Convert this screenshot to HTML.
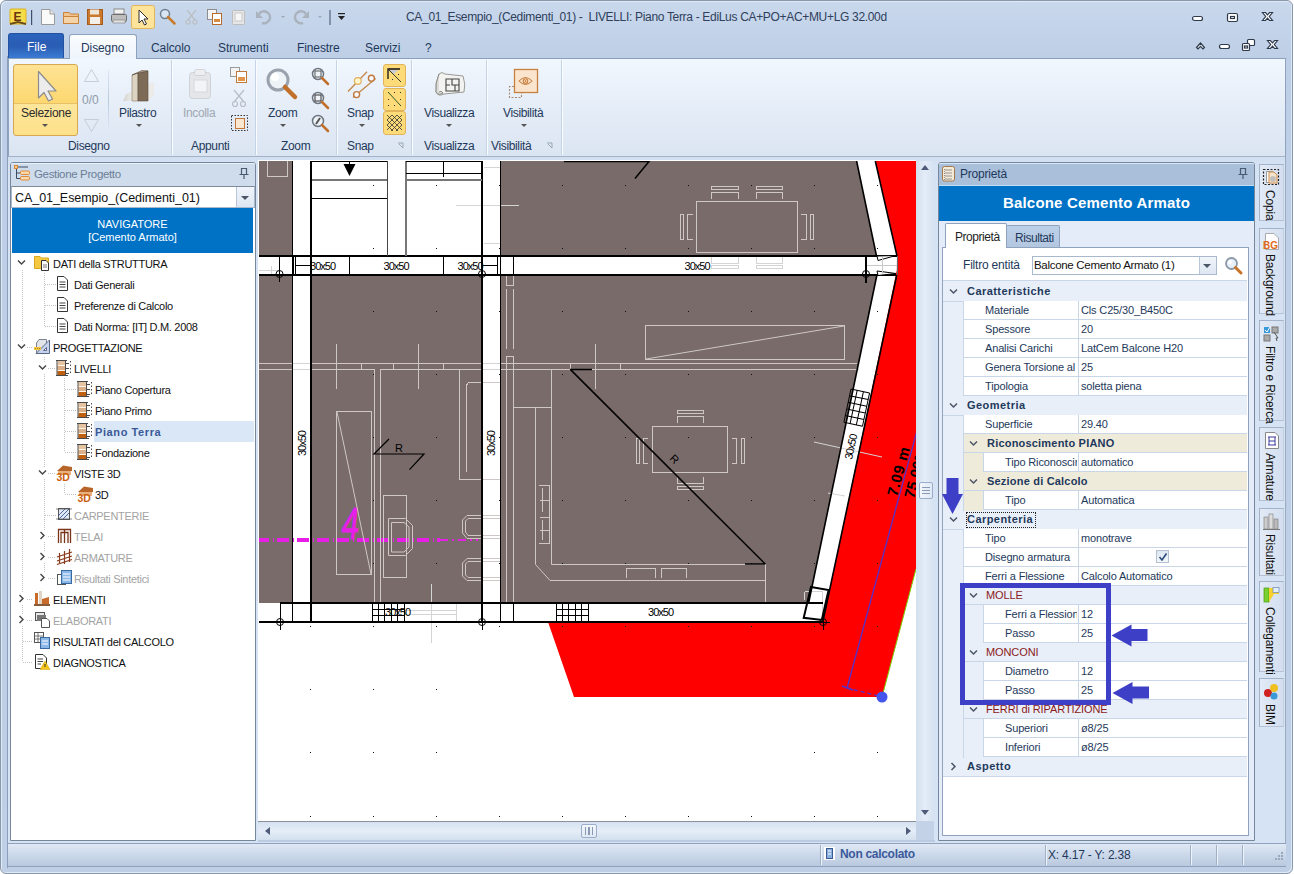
<!DOCTYPE html>
<html><head><meta charset="utf-8">
<style>
*{box-sizing:border-box;margin:0;padding:0}
html,body{width:1294px;height:874px;overflow:hidden;background:#fff;font-family:"Liberation Sans",sans-serif;color:#1e1e1e}
.a{position:absolute}
.t{position:absolute;white-space:nowrap;line-height:1}
/* frame */
#frame{left:0;top:0;width:1293px;height:874px;border:1px solid #8b98aa;border-radius:6px 6px 6px 6px;box-shadow:inset 1px 1px 0 #dfeaf7,inset -1px -1px 0 #dfeaf7;background:linear-gradient(#c9d8ec,#bdcee6 60px,#becfe6)}
.tab{font-size:12px;color:#1e395b;top:42px;letter-spacing:-0.1px}
.rb-lbl{font-size:12px;color:#1e395b;top:140px;letter-spacing:-0.35px}
.rb-big{font-size:12px;color:#1e395b;top:107px;letter-spacing:-0.35px}
.sep{width:1px;background:linear-gradient(#dfe8f4,#b9c9dd,#dfe8f4)}
.gsep{top:60px;width:2px;height:95px;border-left:1px solid #c5d3e6;border-right:1px solid #fafcff}
.arr{width:0;height:0;border-left:3px solid transparent;border-right:3px solid transparent;border-top:3px solid #555}
</style></head><body>
<div id="frame" class="a"></div>
<!-- title bar -->
<div class="a" style="left:7px;top:56px;width:1px;height:812px;background:#8b9dbb"></div>
<div class="t" style="left:406px;top:11px;font-size:12px;color:#2f3f5c;letter-spacing:-0.32px">CA_01_Esempio_(Cedimenti_01) -&nbsp; LIVELLI: Piano Terra - EdiLus CA+PO+AC+MU+LG 32.00d</div>
<!-- window buttons -->
<svg class="a" style="left:1186px;top:8px" width="100" height="46">
 <g fill="#fff" stroke="#2e3a4c" stroke-width="1.2">
  <rect x="6.5" y="8.5" width="10" height="4" rx="2"/>
  <rect x="41.5" y="5.5" width="10" height="8" rx="1.5"/><rect x="44.5" y="8.5" width="4" height="2" fill="none"/>
  <path d="M76.5 4.5 L79.5 4.5 L81.5 6.8 L83.5 4.5 L86.5 4.5 L83.3 8.5 L86.5 12.5 L83.5 12.5 L81.5 10.2 L79.5 12.5 L76.5 12.5 L79.7 8.5Z"/>
  <path d="M10.5 39.5 L14.5 35 L18.5 39.5 L17 41 L14.5 38.3 L12 41Z"/>
  <rect x="33.5" y="36.5" width="10" height="4" rx="2"/>
  <rect x="61.5" y="31.5" width="7" height="6" rx="1"/><rect x="56.5" y="35.5" width="7" height="7" rx="1"/><rect x="58.5" y="38" width="3" height="2" fill="none"/>
  <path d="M81.5 32.5 L84.5 32.5 L86.5 34.8 L88.5 32.5 L91.5 32.5 L88.3 36.5 L91.5 40.5 L88.5 40.5 L86.5 38.2 L84.5 40.5 L81.5 40.5 L84.7 36.5Z"/>
 </g>
</svg>
<!-- QAT -->
<svg class="a" style="left:0;top:0" width="360" height="32">
 <!-- E logo -->
 <rect x="10" y="9" width="16" height="15" rx="1" fill="#f7dc4a" stroke="#d9b21c"/>
 <path d="M10 23 L18 21 L26 23 L26 25 L18 23 L10 25Z" fill="#6b4a1a"/>
 <text x="13.5" y="21" font-family="Liberation Sans" font-weight="bold" font-size="12" fill="#6b3410">E</text>
 <rect x="31" y="10" width="1.2" height="15" fill="#40506a"/>
 <!-- new doc -->
 <path d="M41.5 9.5 H50 L54.5 14 V24.5 H41.5Z" fill="#fafafa" stroke="#9a9a9a"/>
 <path d="M50 9.5 V14 H54.5" fill="#e8e8e8" stroke="#9a9a9a"/>
 <!-- folder -->
 <path d="M63.5 12.5 H69 L71 14 H78.5 V23.5 H63.5Z" fill="#f0c48e" stroke="#c8823a"/>
 <path d="M63.5 16.5 H78.5 V23.5 H63.5Z" fill="#f5d3a8" stroke="#c8823a"/>
 <!-- save -->
 <rect x="87.5" y="9.5" width="15" height="15" fill="#c9782e" stroke="#a65a1c"/>
 <rect x="90" y="9.5" width="9" height="5" fill="#efe4d8"/>
 <rect x="90" y="17" width="10" height="7" fill="#f4efe8"/>
 <!-- printer -->
 <rect x="114" y="9" width="10" height="5" fill="#f2f2f2" stroke="#8a8a8a"/>
 <rect x="111.5" y="14.5" width="15" height="7" rx="1" fill="#bdbdbd" stroke="#6d6d6d"/>
 <rect x="113" y="20" width="12" height="3" fill="#e0e0e0" stroke="#7a7a7a" stroke-width=".6"/>
 <!-- pointer highlighted -->
 <rect x="131.5" y="5.5" width="23" height="23" rx="2" fill="#fde49a" stroke="#e2b65a"/>
 <path d="M139 10 V23 L142 20 L144.5 25 L146.5 24 L144 19 H148Z" fill="#fff" stroke="#303030" stroke-width="1"/>
 <!-- magnifier -->
 <circle cx="165" cy="14" r="4.5" fill="#d8e6f4" stroke="#6f7f90" stroke-width="1.5"/>
 <path d="M168 17 L174.5 23.5" stroke="#c87b2a" stroke-width="2.5" stroke-linecap="round"/>
 <!-- scissors disabled -->
 <path d="M187 10 L195 20 M196 10 L188 20" stroke="#b9b9b9" stroke-width="1.2"/>
 <circle cx="188" cy="22" r="2.2" fill="none" stroke="#b9b9b9"/><circle cx="195" cy="22" r="2.2" fill="none" stroke="#b9b9b9"/>
 <!-- copy -->
 <rect x="207.5" y="9.5" width="9" height="10" fill="#f4f4f4" stroke="#8d8d8d"/>
 <rect x="212.5" y="13.5" width="9" height="11" fill="#fff" stroke="#b86a2a"/>
 <rect x="214" y="19" width="6" height="3" fill="#d98a3c"/>
 <!-- paste disabled -->
 <rect x="232.5" y="10.5" width="12" height="14" rx="1" fill="#e6e6e6" stroke="#bdbdbd"/>
 <rect x="235" y="13" width="7" height="8" fill="#f6f6f6" stroke="#c8c8c8"/>
 <!-- undo -->
 <path d="M259 14 A6 6 0 1 1 262 23" fill="none" stroke="#a9b2bd" stroke-width="2.5"/>
 <path d="M256 11 L256 18 L263 18Z" fill="#a9b2bd"/>
 <path d="M281 16 L285 16 L283 18Z" fill="#a0aab6"/>
 <!-- redo -->
 <path d="M306 14 A6 6 0 1 0 303 23" fill="none" stroke="#a9b2bd" stroke-width="2.5"/>
 <path d="M309 11 L309 18 L302 18Z" fill="#a9b2bd"/>
 <path d="M318 16 L322 16 L320 18Z" fill="#a0aab6"/>
 <rect x="329.5" y="10" width="1" height="15" fill="#40506a"/>
 <rect x="338" y="13" width="7" height="1.2" fill="#222"/>
 <path d="M338 16 L345 16 L341.5 20Z" fill="#222"/>
</svg>


<!-- tabs -->
<div class="a" style="left:8px;top:33px;width:56px;height:25px;border-radius:3px 3px 0 0;background:linear-gradient(#2b63bd,#2a5db3 50%,#3b7bd3);border:1px solid #2451a0;border-bottom:none"></div>
<div class="t" style="left:27px;top:41px;font-size:12px;color:#fff">File</div>
<div class="a" style="left:69px;top:34px;width:68px;height:25px;border-radius:3px 3px 0 0;background:linear-gradient(#fbfdff,#eef4fc);border:1px solid #8ea3bf;border-bottom:none;z-index:2"></div>
<div class="t tab" style="left:81px;z-index:3">Disegno</div>
<div class="t tab" style="left:151px">Calcolo</div>
<div class="t tab" style="left:218px">Strumenti</div>
<div class="t tab" style="left:297px">Finestre</div>
<div class="t tab" style="left:365px">Servizi</div>
<div class="t tab" style="left:425px">?</div>

<!-- ribbon body -->
<div class="a" style="left:8px;top:58px;width:1278px;height:99px;border:1px solid #8ea3bf;border-top-color:#8a9fbb;border-bottom-color:#a2b3ca;background:linear-gradient(#f1f7fe,#e4ecf7 55%,#dbe5f2)"></div>
<!-- ribbon content -->
<div class="a" style="left:13px;top:64px;width:65px;height:72px;border:1px solid #d9a84e;border-radius:3px;background:linear-gradient(#fee394,#fdd870 54%,#fde69c 55%,#fde08a)"></div>
<div class="a" style="left:14px;top:103px;width:63px;height:1px;background:#e8c06a"></div>
<svg class="a" style="left:13px;top:64px" width="65" height="40"><path d="M25.5 7.5 V34 L31 28.5 L35.5 37 L39.5 35 L35 27 H43Z" fill="#ececec" stroke="#8c8c8c" stroke-width="1.2" stroke-linejoin="round"/></svg>
<div class="t rb-big" style="left:21px;color:#2b2b2b;letter-spacing:-0.3px">Selezione</div>
<div class="a arr" style="left:42px;top:124px"></div>
<svg class="a" style="left:80px;top:64px" width="24" height="72">
 <path d="M4.5 17.5 L11.5 5.5 L18.5 17.5Z" fill="none" stroke="#c5cdd8"/>
 <path d="M4.5 55.5 L11.5 67.5 L18.5 55.5Z" fill="none" stroke="#c5cdd8"/>
</svg>
<div class="t" style="left:82px;top:94px;font-size:12px;color:#8e9aa8">0/0</div>
<div class="a sep" style="left:108px;top:70px;height:60px"></div>
<svg class="a" style="left:118px;top:66px" width="42" height="40">
 <defs><linearGradient id="slab" x1="0" y1="0" x2="1" y2="0"><stop offset="0" stop-color="#d4d4d0"/><stop offset="1" stop-color="#f0f0ee"/></linearGradient></defs>
 <path d="M5 35 L8 28 L16 25 L16 35Z" fill="url(#slab)"/>
 <path d="M24 20 L36 16 L36 30 L30 35 L24 35Z" fill="#ecebea"/>
 <path d="M14 9 L20 7 L20 35 L14 35Z" fill="#ddd3c2" stroke="#8a7a66" stroke-width=".6"/>
 <path d="M20 7 L30 5 L30 35 L20 35Z" fill="#7d6b57" stroke="#5a4a3a" stroke-width=".6"/>
 <path d="M14 9 L24 4.5 L30 5 L20 7Z" fill="#b8ab96" stroke="#5a4a3a" stroke-width=".6"/>
</svg>
<div class="t rb-big" style="left:119px">Pilastro</div>
<div class="a arr" style="left:136px;top:124px"></div>
<div class="t rb-lbl" style="left:68px">Disegno</div>
<div class="a gsep" style="left:171px"></div>

<svg class="a" style="left:186px;top:68px" width="30" height="34">
 <rect x="3.5" y="4.5" width="21" height="26" rx="3" fill="#e4e6e9" stroke="#cfd3d8"/>
 <rect x="8.5" y="1.5" width="11" height="6" rx="2" fill="#eceef0" stroke="#cfd3d8"/>
 <rect x="8" y="12" width="13" height="12" fill="#f3f4f5" stroke="#d5d8dc"/>
</svg>
<div class="t rb-big" style="left:183px;color:#a0a8b2">Incolla</div>
<svg class="a" style="left:228px;top:64px" width="24" height="72">
 <rect x="2.5" y="3.5" width="9" height="9" fill="#f3f3f3" stroke="#9a9a9a"/>
 <rect x="8.5" y="7.5" width="10" height="11" fill="#fff" stroke="#c0783a"/><rect x="10" y="13" width="7" height="4" fill="#e3964a"/>
 <path d="M6 26 L16 38 M16 26 L6 38" stroke="#b8bec6" stroke-width="1.2"/>
 <circle cx="7" cy="40" r="2.5" fill="none" stroke="#b8bec6" stroke-width="1.2"/><circle cx="15" cy="40" r="2.5" fill="none" stroke="#b8bec6" stroke-width="1.2"/>
 <rect x="3.5" y="51.5" width="16" height="15" fill="none" stroke="#333" stroke-dasharray="1.5 1.5"/>
 <rect x="7.5" y="54.5" width="9" height="10" fill="#fbe6cf" stroke="#c4763a"/>
</svg>
<div class="t rb-lbl" style="left:191px">Appunti</div>
<div class="a gsep" style="left:255px"></div>

<svg class="a" style="left:264px;top:66px" width="38" height="36">
 <circle cx="14" cy="14" r="10" fill="#eef3f8" stroke="#9aa3ad" stroke-width="3"/>
 <circle cx="11" cy="11" r="4" fill="#fff"/>
 <path d="M21 21 L31 31" stroke="#c0702a" stroke-width="4.5" stroke-linecap="round"/>
</svg>
<div class="t rb-big" style="left:268px">Zoom</div>
<div class="a arr" style="left:280px;top:124px"></div>
<svg class="a" style="left:308px;top:64px" width="24" height="72">
 <circle cx="10" cy="10" r="5.5" fill="#eef3f8" stroke="#6d7580" stroke-width="1.5"/><rect x="7" y="7" width="6" height="6" fill="none" stroke="#333" stroke-width=".8"/>
 <path d="M14 14 L20 20" stroke="#c0702a" stroke-width="2.5" stroke-linecap="round"/>
 <circle cx="10" cy="34" r="5.5" fill="#eef3f8" stroke="#6d7580" stroke-width="1.5"/><rect x="7" y="31" width="6" height="6" fill="none" stroke="#333" stroke-width="1"/>
 <path d="M14 38 L20 44" stroke="#c0702a" stroke-width="2.5" stroke-linecap="round"/>
 <circle cx="10" cy="57" r="5.5" fill="#eef3f8" stroke="#6d7580" stroke-width="1.5"/><path d="M8 60 L12 54" stroke="#555" stroke-width="2"/>
 <path d="M14 61 L20 67" stroke="#c0702a" stroke-width="2.5" stroke-linecap="round"/>
</svg>
<div class="t rb-lbl" style="left:281px">Zoom</div>
<div class="a gsep" style="left:336px"></div>

<svg class="a" style="left:345px;top:68px" width="34" height="34">
 <path d="M3 23.5 L22 3.7 M8 29.5 L30.7 10.5" stroke="#c48a4e" stroke-width="1.4"/>
 <circle cx="12.8" cy="13" r="3.4" fill="#fff6cc" stroke="#e0b060" stroke-width="1.2"/>
 <circle cx="26.4" cy="10.2" r="3" fill="#f7f9fc" stroke="#c07a40" stroke-width="1.4"/>
 <circle cx="11.6" cy="26.6" r="3" fill="#f7f9fc" stroke="#c07a40" stroke-width="1.4"/>
</svg>
<div class="t rb-big" style="left:347px">Snap</div>
<div class="a arr" style="left:359px;top:124px"></div>
<svg class="a" style="left:382px;top:63px" width="26" height="74">
 <rect x="1.5" y="1.5" width="22" height="22" rx="2.5" fill="#fddb78" stroke="#e2b45a"/>
 <rect x="1.5" y="25.5" width="22" height="22" rx="2.5" fill="#fddb78" stroke="#e2b45a"/>
 <rect x="1.5" y="48.5" width="22" height="23" rx="2.5" fill="#fddb78" stroke="#e2b45a"/>
 <path d="M6 16 V6 H18" fill="none" stroke="#111" stroke-width="1.3"/>
 <path d="M7 7 H16 L12 11Z" fill="#c8ccd8"/>
 <path d="M7 7 L19 19" stroke="#222" stroke-width=".9"/>
 <g fill="#333"><rect x="10" y="16" width="1" height="1"/><rect x="16" y="16" width="1" height="1"/><rect x="16" y="11" width="1" height="1"/>
 <rect x="6" y="29" width="1" height="1"/><rect x="12" y="29" width="1" height="1"/><rect x="18" y="29" width="1" height="1"/>
 <rect x="6" y="36" width="1" height="1"/><rect x="18" y="36" width="1" height="1"/>
 <rect x="6" y="42" width="1" height="1"/><rect x="12" y="42" width="1" height="1"/><rect x="18" y="42" width="1" height="1"/></g>
 <path d="M6 29 L19 43" stroke="#2f5a2a" stroke-width="1"/>
 <defs><clipPath id="hc"><rect x="5" y="52" width="15" height="16"/></clipPath></defs>
 <g clip-path="url(#hc)" stroke="#333" stroke-width=".8"><path d="M0 52 L16 68 M5 52 L21 68 M10 52 L26 68 M15 52 L31 68 M-5 52 L11 68 M20 52 L4 68 M15 52 L-1 68 M10 52 L-6 68 M25 52 L9 68 M30 52 L14 68"/></g>
</svg>
<div class="t rb-lbl" style="left:347px">Snap</div>
<svg class="a" style="left:397px;top:142px" width="8" height="8"><path d="M1 1 H6 V6" fill="none" stroke="#9aa6b6"/><path d="M2 2 L6 6" stroke="#9aa6b6"/></svg>
<div class="a gsep" style="left:411px"></div>

<svg class="a" style="left:432px;top:70px" width="36" height="30">
 <path d="M7 4 Q10 1 13 4 L31 6 Q34 14 32 22 L12 24 Q6 27 4 22 Q3 14 7 4Z" fill="#f3f3f1" stroke="#9a9a96"/>
 <path d="M7 4 Q3 13 4 22 Q7 26 11 23 Q9 20 7 22" fill="#dedcd8" stroke="#8a8a86"/>
 <path d="M14 9 H27 V21 H14Z M20 9 V15 H27 M14 15 H18 M23 15 V21" fill="none" stroke="#444" stroke-width="1.1"/>
</svg>
<div class="t rb-big" style="left:424px">Visualizza</div>
<div class="a arr" style="left:446px;top:124px"></div>
<div class="t rb-lbl" style="left:424px">Visualizza</div>
<div class="a gsep" style="left:486px"></div>

<svg class="a" style="left:506px;top:66px" width="36" height="36">
 <rect x="8.5" y="3.5" width="23" height="23" fill="#fbe4cd" stroke="#c8803e" stroke-width="1.3"/>
 <path d="M13 15 Q19.5 8 26 15 Q19.5 22 13 15Z" fill="none" stroke="#c8803e" stroke-width="1.1"/>
 <circle cx="19.5" cy="15" r="2.3" fill="none" stroke="#c8803e" stroke-width="1.1"/><circle cx="19.5" cy="15" r=".9" fill="#c8803e"/>
 <path d="M8 20.5 H3.5 V31.5 H15.5 V27" fill="none" stroke="#a88a6a" stroke-width="1.1" stroke-dasharray="2 1.5"/>
</svg>
<div class="t rb-big" style="left:503px">Visibilità</div>
<div class="a arr" style="left:521px;top:124px"></div>
<div class="t rb-lbl" style="left:491px">Visibilità</div>
<svg class="a" style="left:546px;top:142px" width="8" height="8"><path d="M1 1 H6 V6" fill="none" stroke="#9aa6b6"/><path d="M2 2 L6 6" stroke="#9aa6b6"/></svg>
<div class="a gsep" style="left:561px"></div>


<!-- below ribbon band -->
<div class="a" style="left:8px;top:157px;width:1278px;height:686px;background:linear-gradient(#d2dff0,#d6e3f4 8px,#d6e3f4)"></div>

<!-- left panel -->
<div class="a" style="left:10px;top:162px;width:246px;height:679px;border:1px solid #76879c;border-radius:3px 3px 0 0;background:#fff"></div>
<div class="a" style="left:11px;top:163px;width:244px;height:23px;border-radius:2px 2px 0 0;border-top:1px solid #e8f0fa;background:#cfdcec"></div>
<svg class="a" style="left:14px;top:165px" width="18" height="18"><path d="M2.5 2 V13.5 H6 M2.5 8 H6" fill="none" stroke="#3a4a60" stroke-width="1"/><path d="M2.5 2 H14" stroke="#3a4a60"/><rect x="0.5" y="0.5" width="3" height="3" fill="#f7c88a" stroke="#d9883a"/><rect x="6.5" y="6" width="9" height="3.5" rx="1" fill="#fbd8a8" stroke="#e08a3a"/><rect x="6.5" y="11.5" width="9" height="3.5" rx="1" fill="#fbd8a8" stroke="#e08a3a"/></svg>
<div class="t" style="left:34px;top:169px;font-size:11.5px;color:#6c7e98;letter-spacing:-0.35px">Gestione Progetto</div>
<svg class="a" style="left:238px;top:167px" width="12" height="13"><path d="M3.5 1.5 H8.5 V7.5 H3.5Z M1.5 7.5 H10.5 M6 7.5 V12" fill="none" stroke="#4a5a70" stroke-width="1.2"/></svg>
<div class="a" style="left:11px;top:186px;width:244px;height:22px;border:1px solid #a9b8cc;border-top-color:#7d8a9c;background:#fff"></div>
<div class="t" style="left:15px;top:192px;font-size:12.5px;color:#111;letter-spacing:-0.05px">CA_01_Esempio_(Cedimenti_01)</div>
<div class="a" style="left:236px;top:187px;width:18px;height:20px;border-left:1px solid #b8c6d8;background:linear-gradient(#f1f5fb,#dde6f2)"></div>
<div class="a" style="left:241px;top:196px;width:0;height:0;border-left:4px solid transparent;border-right:4px solid transparent;border-top:4px solid #4a5566"></div>
<div class="a" style="left:12px;top:208px;width:241px;height:45px;background:#0072c6"></div>
<div class="t" style="left:12px;width:241px;text-align:center;top:219px;font-size:11px;color:#fff">NAVIGATORE</div>
<div class="t" style="left:12px;width:241px;text-align:center;top:232px;font-size:11px;color:#fff">[Cemento Armato]</div>
<div class="a" style="left:94px;top:421px;width:160px;height:21px;background:#d9e7f7"></div>
<svg class="a" style="left:11px;top:253px" width="120" height="420"><path d="M11.5 17 V88 M11.5 100 V340 M11.5 352 V361 M11.5 373 V409 M16 94.5 H22 M16 346.5 H22 M16 367.5 H22 M11.5 388.5 H22 M11.5 409.5 H22 M33.5 20 V73 M33.5 31.5 H45 M33.5 52.5 H45 M33.5 73.5 H45 M33.5 104 V109 M33.5 121 V214 M33.5 226 V277 M33.5 289 V298 M33.5 310 V319 M37 115.5 H44 M37 220.5 H44 M37 283.5 H44 M37 304.5 H44 M37 325.5 H44 M33.5 262.5 H45 M53.5 125 V199 M53.5 136.5 H65 M53.5 157.5 H65 M53.5 178.5 H65 M53.5 199.5 H65 M53.5 231 V241 M53.5 241.5 H65" stroke="#c2c2c2" stroke-dasharray="1 1" stroke-width="1" fill="none" shape-rendering="crispEdges"/></svg>

<svg class="a" style="left:17px;top:259px" width="9" height="7"><path d="M1 1.5 L4.5 5 L8 1.5" fill="none" stroke="#444" stroke-width="1.4"/></svg>
<svg class="a" style="left:34px;top:254px" width="17" height="18"><path d="M0.5 2.5 H6 L7.5 4 H14.5 V14.5 H0.5Z" fill="#f5c842" stroke="#d9a520"/><path d="M7.5 6.5 H12 L14.5 9 V16.5 H7.5Z" fill="#fff" stroke="#333"/><path d="M9 11 H13 M9 13 H13" stroke="#555" stroke-width=".8"/></svg>
<div class="t" style="left:53px;top:258.5px;font-size:11px;color:#111;letter-spacing:-0.3px">DATI della STRUTTURA</div>
<svg class="a" style="left:56px;top:275px" width="17" height="18"><path d="M1.5 1.5 H8 L11.5 5 V15.5 H1.5Z" fill="#fff" stroke="#333"/><path d="M3.5 7 H9.5 M3.5 9.5 H9.5 M3.5 12 H9.5" stroke="#444" stroke-width="1"/></svg>
<div class="t" style="left:74px;top:279.5px;font-size:11px;color:#111;letter-spacing:-0.3px">Dati Generali</div>
<svg class="a" style="left:56px;top:296px" width="17" height="18"><path d="M1.5 1.5 H8 L11.5 5 V15.5 H1.5Z" fill="#fff" stroke="#333"/><path d="M3.5 7 H9.5 M3.5 9.5 H9.5 M3.5 12 H9.5" stroke="#444" stroke-width="1"/></svg>
<div class="t" style="left:74px;top:300.5px;font-size:11px;color:#111;letter-spacing:-0.3px">Preferenze di Calcolo</div>
<svg class="a" style="left:56px;top:317px" width="17" height="18"><path d="M1.5 1.5 H8 L11.5 5 V15.5 H1.5Z" fill="#fff" stroke="#333"/><path d="M3.5 7 H9.5 M3.5 9.5 H9.5 M3.5 12 H9.5" stroke="#444" stroke-width="1"/></svg>
<div class="t" style="left:74px;top:321.5px;font-size:11px;color:#111;letter-spacing:-0.3px">Dati Norma: [IT] D.M. 2008</div>
<svg class="a" style="left:17px;top:343px" width="9" height="7"><path d="M1 1.5 L4.5 5 L8 1.5" fill="none" stroke="#444" stroke-width="1.4"/></svg>
<svg class="a" style="left:34px;top:338px" width="17" height="18"><path d="M2.5 5 L5 1.5 H12.5 V14.5 H2.5Z" fill="#e2e4e8" stroke="#7a8494"/><path d="M2 15.5 L15.5 2 V15.5Z" fill="#c6d2ec" stroke="#5a6a86"/><path d="M9.5 12.5 L12.5 9.5 V12.5Z" fill="#fff" stroke="#5a6a86"/><rect x="0" y="9" width="7" height="3" fill="#f2c440"/><path d="M1 10.5 H6" stroke="#b08a20" stroke-dasharray="1 1"/></svg>
<div class="t" style="left:53px;top:342.5px;font-size:11px;color:#111;letter-spacing:-0.3px">PROGETTAZIONE</div>
<svg class="a" style="left:38px;top:364px" width="9" height="7"><path d="M1 1.5 L4.5 5 L8 1.5" fill="none" stroke="#444" stroke-width="1.4"/></svg>
<svg class="a" style="left:56px;top:359px" width="17" height="18"><rect x="1.5" y="2" width="8" height="14" fill="#e6c4a2"/><rect x="1.5" y="7" width="8" height="4" fill="#d9b08a"/><path d="M1.5 6.5 H9.5 M1.5 11.5 H9.5" stroke="#fff6e8" stroke-width="1.2"/><rect x="1.5" y="12" width="8" height="4" fill="#c0600e"/><path d="M0 1.5 H11 M-0.5 16.5 H12 M1 1.5 V16.5 M9.5 1.5 V16.5 M9.5 4.5 H13 M9.5 9.5 H13 M9.5 14.5 H13" stroke="#4a4a4a" stroke-width="1" fill="none"/><path d="M14.5 2 V16" stroke="#4a4a4a" stroke-dasharray="1.5 2"/></svg>
<div class="t" style="left:74px;top:363.5px;font-size:11px;color:#111;letter-spacing:-0.3px">LIVELLI</div>
<svg class="a" style="left:77px;top:380px" width="17" height="18"><rect x="1.5" y="2" width="8" height="14" fill="#e6c4a2"/><rect x="1.5" y="7" width="8" height="4" fill="#d9b08a"/><path d="M1.5 6.5 H9.5 M1.5 11.5 H9.5" stroke="#fff6e8" stroke-width="1.2"/><rect x="1.5" y="12" width="8" height="4" fill="#c0600e"/><path d="M0 1.5 H11 M-0.5 16.5 H12 M1 1.5 V16.5 M9.5 1.5 V16.5 M9.5 4.5 H13 M9.5 9.5 H13 M9.5 14.5 H13" stroke="#4a4a4a" stroke-width="1" fill="none"/><path d="M14.5 2 V16" stroke="#4a4a4a" stroke-dasharray="1.5 2"/></svg>
<div class="t" style="left:95px;top:384.5px;font-size:11px;color:#111;letter-spacing:-0.3px">Piano Copertura</div>
<svg class="a" style="left:77px;top:401px" width="17" height="18"><rect x="1.5" y="2" width="8" height="14" fill="#e6c4a2"/><rect x="1.5" y="7" width="8" height="4" fill="#d9b08a"/><path d="M1.5 6.5 H9.5 M1.5 11.5 H9.5" stroke="#fff6e8" stroke-width="1.2"/><rect x="1.5" y="12" width="8" height="4" fill="#c0600e"/><path d="M0 1.5 H11 M-0.5 16.5 H12 M1 1.5 V16.5 M9.5 1.5 V16.5 M9.5 4.5 H13 M9.5 9.5 H13 M9.5 14.5 H13" stroke="#4a4a4a" stroke-width="1" fill="none"/><path d="M14.5 2 V16" stroke="#4a4a4a" stroke-dasharray="1.5 2"/></svg>
<div class="t" style="left:95px;top:405.5px;font-size:11px;color:#111;letter-spacing:-0.3px">Piano Primo</div>
<svg class="a" style="left:77px;top:422px" width="17" height="18"><rect x="1.5" y="2" width="8" height="14" fill="#e6c4a2"/><rect x="1.5" y="7" width="8" height="4" fill="#d9b08a"/><path d="M1.5 6.5 H9.5 M1.5 11.5 H9.5" stroke="#fff6e8" stroke-width="1.2"/><rect x="1.5" y="12" width="8" height="4" fill="#c0600e"/><path d="M0 1.5 H11 M-0.5 16.5 H12 M1 1.5 V16.5 M9.5 1.5 V16.5 M9.5 4.5 H13 M9.5 9.5 H13 M9.5 14.5 H13" stroke="#4a4a4a" stroke-width="1" fill="none"/><path d="M14.5 2 V16" stroke="#4a4a4a" stroke-dasharray="1.5 2"/></svg>
<div class="t" style="left:95px;top:426.5px;font-size:11px;font-weight:bold;color:#3b5998;letter-spacing:0.6px">Piano Terra</div>
<svg class="a" style="left:77px;top:443px" width="17" height="18"><rect x="1.5" y="2" width="8" height="14" fill="#e6c4a2"/><rect x="1.5" y="7" width="8" height="4" fill="#d9b08a"/><path d="M1.5 6.5 H9.5 M1.5 11.5 H9.5" stroke="#fff6e8" stroke-width="1.2"/><rect x="1.5" y="12" width="8" height="4" fill="#c0600e"/><path d="M0 1.5 H11 M-0.5 16.5 H12 M1 1.5 V16.5 M9.5 1.5 V16.5 M9.5 4.5 H13 M9.5 9.5 H13 M9.5 14.5 H13" stroke="#4a4a4a" stroke-width="1" fill="none"/><path d="M14.5 2 V16" stroke="#4a4a4a" stroke-dasharray="1.5 2"/></svg>
<div class="t" style="left:95px;top:447.5px;font-size:11px;color:#111;letter-spacing:-0.3px">Fondazione</div>
<svg class="a" style="left:38px;top:469px" width="9" height="7"><path d="M1 1.5 L4.5 5 L8 1.5" fill="none" stroke="#444" stroke-width="1.4"/></svg>
<svg class="a" style="left:56px;top:464px" width="17" height="18"><path d="M1 7 L7 1.5 L16 3 L16 7Z" fill="#b8652a"/><path d="M2 7 H15 V11 H2Z" fill="#e7b07c"/><text x="0.5" y="17" font-family="Liberation Sans" font-weight="bold" font-size="10.5" fill="#c8600e">3D</text></svg>
<div class="t" style="left:74px;top:468.5px;font-size:11px;color:#111;letter-spacing:-0.3px">VISTE 3D</div>
<svg class="a" style="left:77px;top:485px" width="17" height="18"><path d="M1 7 L7 1.5 L16 3 L16 7Z" fill="#b8652a"/><path d="M2 7 H15 V11 H2Z" fill="#e7b07c"/><text x="0.5" y="17" font-family="Liberation Sans" font-weight="bold" font-size="10.5" fill="#c8600e">3D</text></svg>
<div class="t" style="left:95px;top:489.5px;font-size:11px;color:#111;letter-spacing:-0.3px">3D</div>
<svg class="a" style="left:56px;top:506px" width="17" height="18"><rect x="2.5" y="2.5" width="11" height="11" fill="#dfe8f4" stroke="#555"/><path d="M3 9 L9 3 M3 13 L13 3 M7 13 L13 7" stroke="#4a6aa0"/><path d="M0 3 H16 M0 13 H16" stroke="#555" stroke-width=".7"/></svg>
<div class="t" style="left:74px;top:510.5px;font-size:11px;color:#a3a3a3;letter-spacing:-0.3px">CARPENTERIE</div>
<svg class="a" style="left:39px;top:531px" width="7" height="10"><path d="M1.5 1 L5 4.5 L1.5 8" fill="none" stroke="#444" stroke-width="1.4"/></svg>
<svg class="a" style="left:56px;top:527px" width="17" height="18"><path d="M2.5 16 V2.5 H14.5 V16 M8.5 2.5 V16 M5 16 V5.5 H12 V16" fill="none" stroke="#7a3418" stroke-width="1.3"/></svg>
<div class="t" style="left:74px;top:531.5px;font-size:11px;color:#a3a3a3;letter-spacing:-0.3px">TELAI</div>
<svg class="a" style="left:39px;top:552px" width="7" height="10"><path d="M1.5 1 L5 4.5 L1.5 8" fill="none" stroke="#444" stroke-width="1.4"/></svg>
<svg class="a" style="left:56px;top:548px" width="17" height="18"><path d="M3.5 15 V5 M8.5 16 V3 M13.5 14 V1 M1 9 L16 4 M1 13 L16 8 M1 16.5 L16 11.5" fill="none" stroke="#8a3a1a" stroke-width="1.2"/></svg>
<div class="t" style="left:74px;top:552.5px;font-size:11px;color:#a3a3a3;letter-spacing:-0.3px">ARMATURE</div>
<svg class="a" style="left:39px;top:573px" width="7" height="10"><path d="M1.5 1 L5 4.5 L1.5 8" fill="none" stroke="#444" stroke-width="1.4"/></svg>
<svg class="a" style="left:56px;top:569px" width="17" height="18"><rect x="1.5" y="5.5" width="8" height="10" fill="#fff" stroke="#555"/><rect x="5.5" y="1.5" width="10" height="13" fill="#8ab8e8" stroke="#3a6aa0"/><path d="M7 5 H14 M7 8 H14 M7 11 H14" stroke="#fff"/></svg>
<div class="t" style="left:74px;top:573.5px;font-size:11px;color:#a3a3a3;letter-spacing:-0.3px">Risultati Sintetici</div>
<svg class="a" style="left:18px;top:594px" width="7" height="10"><path d="M1.5 1 L5 4.5 L1.5 8" fill="none" stroke="#444" stroke-width="1.4"/></svg>
<svg class="a" style="left:34px;top:590px" width="17" height="18"><rect x="1" y="3" width="3" height="12" fill="#c86a2a"/><rect x="5" y="1" width="3" height="14" fill="#e0d4c4"/><path d="M8 9 L15 7 V15 H8Z" fill="#c86a2a"/><rect x="0" y="14" width="16" height="2" fill="#8a5a3a"/></svg>
<div class="t" style="left:53px;top:594.5px;font-size:11px;color:#111;letter-spacing:-0.3px">ELEMENTI</div>
<svg class="a" style="left:18px;top:615px" width="7" height="10"><path d="M1.5 1 L5 4.5 L1.5 8" fill="none" stroke="#444" stroke-width="1.4"/></svg>
<svg class="a" style="left:34px;top:611px" width="17" height="18"><rect x="1.5" y="1.5" width="9" height="8" fill="#e8e8e8" stroke="#555"/><rect x="3" y="4" width="9" height="6" fill="#777"/><path d="M7.5 7.5 H13 L15.5 10 V16.5 H7.5Z" fill="#fff" stroke="#555"/></svg>
<div class="t" style="left:53px;top:615.5px;font-size:11px;color:#a3a3a3;letter-spacing:-0.3px">ELABORATI</div>
<svg class="a" style="left:34px;top:632px" width="17" height="18"><rect x="0.5" y="0.5" width="9" height="10" fill="#fff" stroke="#555"/><path d="M0.5 4 H9.5 M0.5 7 H9.5 M4 0.5 V10.5" stroke="#555" stroke-width=".8"/><rect x="6.5" y="5.5" width="9" height="11" fill="#8ab8e8" stroke="#3a6aa0"/><path d="M8 9 H14 M8 12 H14" stroke="#fff"/></svg>
<div class="t" style="left:53px;top:636.5px;font-size:11px;color:#111;letter-spacing:-0.3px">RISULTATI del CALCOLO</div>
<svg class="a" style="left:34px;top:653px" width="17" height="18"><path d="M1.5 1.5 H9 L12.5 5 V15.5 H1.5Z" fill="#fff" stroke="#333"/><path d="M3.5 6 H9 M3.5 8.5 H9 M3.5 11 H7" stroke="#444"/><path d="M11 8 L16 16.5 H6Z" fill="#f5c518" stroke="#d0a010" stroke-width=".5"/><path d="M11 11 V14" stroke="#333"/></svg>
<div class="t" style="left:53px;top:657.5px;font-size:11px;color:#111;letter-spacing:-0.3px">DIAGNOSTICA</div>
<!--DRAW-->
<svg class="a" style="left:259px;top:161px" width="657" height="660" viewBox="259 161 657 660" shape-rendering="crispEdges">
<rect x="259" y="161" width="657" height="660" fill="#fff"/>
<g fill="#786b69">
<rect x="259" y="161" width="33" height="95"/>
<rect x="259" y="275" width="33" height="328"/>
<rect x="312" y="275" width="170" height="328"/>
<polygon points="501,161 856.6,161 876.5,256 501,256"/>
<polygon points="501,275 876.9,275 808.6,603 501,603"/>
</g>
<polygon points="875.3,161 916,161 916,569 882,697 574,697 548,622 823,622 896.8,270 897,256" fill="#ff0000" shape-rendering="auto"/>
<path d="M916 569 L882 697" stroke="#7ad000" stroke-width="1" shape-rendering="auto"/>
<g fill="#111"><rect x="310" y="185" width="1" height="1"/><rect x="310" y="248" width="1" height="1"/><rect x="310" y="311" width="1" height="1"/><rect x="310" y="374" width="1" height="1"/><rect x="310" y="437" width="1" height="1"/><rect x="310" y="500" width="1" height="1"/><rect x="310" y="563" width="1" height="1"/><rect x="310" y="626" width="1" height="1"/><rect x="310" y="689" width="1" height="1"/><rect x="310" y="752" width="1" height="1"/><rect x="310" y="816" width="1" height="1"/><rect x="373" y="185" width="1" height="1"/><rect x="373" y="248" width="1" height="1"/><rect x="373" y="311" width="1" height="1"/><rect x="373" y="374" width="1" height="1"/><rect x="373" y="437" width="1" height="1"/><rect x="373" y="500" width="1" height="1"/><rect x="373" y="563" width="1" height="1"/><rect x="373" y="626" width="1" height="1"/><rect x="373" y="689" width="1" height="1"/><rect x="373" y="752" width="1" height="1"/><rect x="373" y="816" width="1" height="1"/><rect x="436" y="185" width="1" height="1"/><rect x="436" y="248" width="1" height="1"/><rect x="436" y="311" width="1" height="1"/><rect x="436" y="374" width="1" height="1"/><rect x="436" y="437" width="1" height="1"/><rect x="436" y="500" width="1" height="1"/><rect x="436" y="563" width="1" height="1"/><rect x="436" y="626" width="1" height="1"/><rect x="436" y="689" width="1" height="1"/><rect x="436" y="752" width="1" height="1"/><rect x="436" y="816" width="1" height="1"/><rect x="499" y="185" width="1" height="1"/><rect x="499" y="248" width="1" height="1"/><rect x="499" y="311" width="1" height="1"/><rect x="499" y="374" width="1" height="1"/><rect x="499" y="437" width="1" height="1"/><rect x="499" y="500" width="1" height="1"/><rect x="499" y="563" width="1" height="1"/><rect x="499" y="626" width="1" height="1"/><rect x="499" y="816" width="1" height="1"/><rect x="562" y="185" width="1" height="1"/><rect x="562" y="248" width="1" height="1"/><rect x="562" y="311" width="1" height="1"/><rect x="562" y="374" width="1" height="1"/><rect x="562" y="437" width="1" height="1"/><rect x="562" y="500" width="1" height="1"/><rect x="562" y="563" width="1" height="1"/><rect x="562" y="626" width="1" height="1"/><rect x="562" y="816" width="1" height="1"/><rect x="625" y="185" width="1" height="1"/><rect x="625" y="248" width="1" height="1"/><rect x="625" y="311" width="1" height="1"/><rect x="625" y="374" width="1" height="1"/><rect x="625" y="437" width="1" height="1"/><rect x="625" y="500" width="1" height="1"/><rect x="625" y="563" width="1" height="1"/><rect x="625" y="626" width="1" height="1"/><rect x="625" y="816" width="1" height="1"/><rect x="688" y="185" width="1" height="1"/><rect x="688" y="248" width="1" height="1"/><rect x="688" y="311" width="1" height="1"/><rect x="688" y="374" width="1" height="1"/><rect x="688" y="437" width="1" height="1"/><rect x="688" y="500" width="1" height="1"/><rect x="688" y="563" width="1" height="1"/><rect x="688" y="626" width="1" height="1"/><rect x="688" y="816" width="1" height="1"/><rect x="751" y="185" width="1" height="1"/><rect x="751" y="248" width="1" height="1"/><rect x="751" y="311" width="1" height="1"/><rect x="751" y="374" width="1" height="1"/><rect x="751" y="437" width="1" height="1"/><rect x="751" y="500" width="1" height="1"/><rect x="751" y="563" width="1" height="1"/><rect x="751" y="626" width="1" height="1"/><rect x="751" y="816" width="1" height="1"/><rect x="814" y="185" width="1" height="1"/><rect x="814" y="248" width="1" height="1"/><rect x="814" y="311" width="1" height="1"/><rect x="814" y="374" width="1" height="1"/><rect x="814" y="437" width="1" height="1"/><rect x="814" y="500" width="1" height="1"/><rect x="814" y="563" width="1" height="1"/><rect x="814" y="626" width="1" height="1"/><rect x="814" y="752" width="1" height="1"/><rect x="814" y="816" width="1" height="1"/><rect x="877" y="185" width="1" height="1"/><rect x="877" y="248" width="1" height="1"/><rect x="877" y="311" width="1" height="1"/><rect x="877" y="374" width="1" height="1"/><rect x="877" y="437" width="1" height="1"/><rect x="877" y="500" width="1" height="1"/><rect x="877" y="563" width="1" height="1"/><rect x="877" y="626" width="1" height="1"/><rect x="877" y="752" width="1" height="1"/><rect x="877" y="816" width="1" height="1"/></g>
<path d="M259 540 H440" stroke="#e81ee8" stroke-width="3.5" stroke-dasharray="12 3.5 1.5 3" stroke-dashoffset="2" fill="none"/>
<path d="M440 540 H478" stroke="#e81ee8" stroke-width="1.5" stroke-dasharray="8 4 2 4" fill="none"/>
<text font-family="Liberation Sans" font-size="44" fill="#e81ee8" stroke="#e81ee8" stroke-width="1.1" transform="translate(340.5 539) scale(0.7 1.02) skewX(-9)">4</text>
<g stroke="#cfc7c5" stroke-width="1" fill="none">
<path d="M259 363.5 H857" stroke-width="1.6"/><path d="M259 369.5 H374.5 M380.5 369.5 H859"/>
<path d="M361.5 363 V369 M393.5 363 V369 M443.5 363 V369 M570.5 363 V369 M620.5 363 V369"/>
<path d="M336.5 344 V389 M418.5 344 V389 M595.5 344 V389"/>
<path d="M374.5 369 V603 M380.5 369 V603"/>
<path d="M336.5 411.5 H371.5 V574.5 H336.5Z"/><path d="M337 412 L371 574" shape-rendering="auto"/>
<path d="M383.5 495.5 H406.5 V577.5 H383.5Z"/>
<path d="M388.5 518.5 H405.5 L412.5 525.5 V548.5 L405.5 555.5 H388.5Z" fill="none" shape-rendering="auto"/>
<path d="M391.5 522.5 H404 L409 527 V547 L404 552 H391.5Z" fill="none" shape-rendering="auto"/>
<path d="M459.5 369 V479.5 H501"/>
<path d="M466.5 472 V387 Q466.5 382 471 382 H500"/>
<path d="M500 515.5 H467 L462.5 520 V533 L467 538.5 H500 M500 518.5 H468 L465.5 521 V532 L468 535.5 H500" shape-rendering="auto"/>
<path d="M500 558.5 H467 L462.5 563 V576 L467 580.5 H500 M500 561.5 H468 L465.5 564 V575 L468 577.5 H500" shape-rendering="auto"/>
<path d="M506.5 275 V285.5 H513.5 V275 M506.5 289 V349 M513.5 289 V349 M506.5 369 V356.5 H513.5 V369 M506.5 370 V603 M513.5 370 V603"/>
<path d="M513.5 407.5 H551.5 M551.5 369 V564.5 H765.5 V603 M535.5 407 V564.5 L550 580.5 H765" shape-rendering="auto"/>
<path d="M538.5 485.5 H549 V543.5 H538.5 M542.5 488 V512 M540 500 H549 M540 517 H549 M540 530 H549 M542.5 520 V540"/>
<path d="M626.5 578 V568.5 H655.5 V578 M661.5 578 V568.5 H686.5 V578"/>
<rect x="696.5" y="201.5" width="101" height="51"/>
<path d="M711.5 186.5 H738 V189.5 H711.5Z M711.5 199 V192.5 H738 V199 M756.5 186.5 H782 V189.5 H756.5Z M756.5 199 V192.5 H782 V199"/>
<path d="M680.5 214.5 H683.5 V239.5 H680.5Z M693 214.5 H687.5 V239.5 H693 M800.5 214.5 H806 V239.5 H800.5 M810.5 214.5 H813.5 V239.5 H810.5Z"/>
<rect x="652.5" y="426.5" width="75" height="46"/>
<path d="M677.5 410.5 H703 V413.5 H677.5Z M677.5 423 V416.5 H703 V423 M677.5 477 V483.5 H703 V477 M677.5 486.5 H703 V489.5 H677.5Z"/>
<path d="M636.5 438.5 H639.5 V463.5 H636.5Z M648 438.5 H643.5 V463.5 H648 M732 438.5 H736.5 V463.5 H732 M741.5 438.5 H744.5 V463.5 H741.5Z"/>
<path d="M645.5 325.5 H844.5 V359.5 H645.5Z"/><path d="M646 359 L844 326" shape-rendering="auto"/>
<path d="M267.5 161 V176.5 H287.5 V161"/>
</g>
<g stroke="#d4d4d4" stroke-width="1" fill="none">
<path d="M484 167.5 H500 M456 205.5 H519 M484 243.5 H500"/>
<path d="M293 363.5 H311 M293 369.5 H311 M483 363.5 H500 M483 369.5 H500"/>
<path d="M711.5 257 V263.5 H738 V257 M711.5 265.5 H738 V268.5 H711.5Z M756.5 257 V263.5 H782 V257 M756.5 265.5 H782 V268.5 H756.5Z"/>
<path d="M404 610.5 H456 M404 614.5 H456 M456.5 603 V622 M431.5 584 V643"/>
<path d="M259 270.5 H280 M271.5 266 V275"/>
<path d="M804.5 591.5 H822 V622 M804.5 591.5 V600"/>
<path d="M814 442 L882 457 M828 493 L845 496" shape-rendering="auto"/>
</g>
<g stroke="#000" fill="none">
<path d="M259 256 H897 M259 275 H896" stroke-width="2"/>
<path d="M877 256 L896 255.5 L878 260.5Z M877 271 L896 273.5 L878 275.5Z" stroke-width="1" fill="#fff" shape-rendering="auto"/>
<path d="M882.5 257 V274 M867 265.5 H897" stroke="#c8c8c8" stroke-width="1"/>
<path d="M280 603 H823 M259 622 H823" stroke-width="2"/>
<path d="M292.5 161 V622" stroke-width="1.5"/>
<path d="M311 161 V622" stroke-width="2"/>
<path d="M482 161 V622" stroke-width="2"/>
<path d="M500.5 161 V622" stroke-width="1"/>
<path d="M387.5 161 V256" stroke="#444" stroke-width="1"/>
<path d="M406 161 V256" stroke="#777" stroke-width="2"/>
<path d="M312 180 H387 M406 180 H482" stroke="#777" stroke-width="2"/>
<path d="M312 198.5 H387 M406 173.5 H482 M443.5 161 V177" stroke-width="1"/>
<path d="M349.5 161 V165 M312 161.5 H387 M406 161.5 H482" stroke-width="1"/>
<polygon points="343.5,164 355.5,164 349.5,176" fill="#000" stroke="none" shape-rendering="auto"/>
<path d="M279.5 256 V280 M293.5 256 V275 M295.5 256 V275 M295 265.5 H311 M349.5 256 V275 M443.5 256 V275 M497.5 256 V275 M513 256 V275 M483 265.5 H497" stroke-width="1"/><path d="M866 256 V283" stroke-width="2"/>
<path d="M897.5 256 V275" stroke="#666" stroke-width="1"/>
<path d="M280.5 603 V630 M513.5 603 V622 M482 603 V630" stroke-width="1"/>
<path d="M856.6 161 L876.5 256 M875.3 161 L897 256 M876.9 275 L808.6 603 M896.8 275 L823 621" stroke-width="1.6" shape-rendering="auto"/>
<polygon points="811,587 828.6,590 821.8,620 803.7,617.8" stroke-width="2" shape-rendering="auto"/>
<path d="M564 161.5 H649 L635 178.5" stroke-width="1.5" shape-rendering="auto"/>
<path d="M389 439 L374 454 H424 L409.5 469.7" stroke-width="1.2" shape-rendering="auto"/>
<path d="M570.3 369.4 L765.4 564.2 M570 369.5 H592 M745 564 H765" stroke-width="1.5" shape-rendering="auto"/>
<circle cx="279.5" cy="274" r="3.5" stroke-width="1" shape-rendering="auto"/><path d="M279.5 267 V282 M273.5 274 H286.5" stroke-width="1"/>
<circle cx="482" cy="274" r="3.5" stroke-width="1" shape-rendering="auto"/><path d="M482 267 V282 M476 274 H489" stroke-width="1"/>
<circle cx="866" cy="274" r="3.5" stroke-width="1" shape-rendering="auto"/><path d="M866 267 V282 M860 274 H873" stroke-width="1"/>
<circle cx="280" cy="622" r="3.5" stroke-width="1" shape-rendering="auto"/><path d="M280 615 V630 M274 622 H287" stroke-width="1"/>
<circle cx="482" cy="622" r="3.5" stroke-width="1" shape-rendering="auto"/><path d="M482 615 V630 M476 622 H489" stroke-width="1"/>
<circle cx="823" cy="622" r="3.5" stroke-width="1" shape-rendering="auto"/><path d="M823 615 V630 M817 622 H830" stroke-width="1"/>
</g>
<g stroke="#000" stroke-width="1" fill="none"><path d="M372.0 603 V622 M378.4 603 V622 M384.8 603 V622 M391.2 603 V622 M397.6 603 V622 M404.0 603 V622 M372 603.0 H404 M372 609.3 H404 M372 615.7 H404 M372 622.0 H404 "/></g>
<g stroke="#000" stroke-width="1" fill="none"><path d="M556.0 603 V622 M562.4 603 V622 M568.8 603 V622 M575.2 603 V622 M581.6 603 V622 M588.0 603 V622 M556 603.0 H588 M556 609.3 H588 M556 615.7 H588 M556 622.0 H588 "/></g>
<g shape-rendering="auto"><g stroke="#000" stroke-width="1" fill="none" transform="translate(851,389) rotate(12)"><path d="M0.0 0 V34 M6.3 0 V34 M12.7 0 V34 M19.0 0 V34 M0 0.0 H19 M0 6.8 H19 M0 13.6 H19 M0 20.4 H19 M0 27.2 H19 M0 34.0 H19 "/></g></g>
<text x="310" y="270" font-family="Liberation Sans" font-size="11" fill="#000" textLength="26" shape-rendering="auto">30x50</text>
<text x="383.5" y="270" font-family="Liberation Sans" font-size="11" fill="#000" textLength="26" shape-rendering="auto">30x50</text>
<text x="457.5" y="270" font-family="Liberation Sans" font-size="11" fill="#000" textLength="26" shape-rendering="auto">30x50</text>
<text x="684.5" y="270" font-family="Liberation Sans" font-size="11" fill="#000" textLength="26" shape-rendering="auto">30x50</text>
<text x="385" y="616" font-family="Liberation Sans" font-size="11" fill="#000" textLength="26" shape-rendering="auto">30x50</text>
<text x="648" y="616" font-family="Liberation Sans" font-size="11" fill="#000" textLength="26" shape-rendering="auto">30x50</text>
<text font-family="Liberation Sans" font-size="11" fill="#000" transform="translate(306,456) rotate(-90)" textLength="26">30x50</text>
<text font-family="Liberation Sans" font-size="11" fill="#000" transform="translate(495,456) rotate(-90)" textLength="26">30x50</text>
<text font-family="Liberation Sans" font-size="11" fill="#000" transform="translate(852,460) rotate(-78)" textLength="26">30x50</text>
<text x="395" y="452" font-family="Liberation Sans" font-size="11" fill="#000">R</text>
<text font-family="Liberation Sans" font-size="11" fill="#000" transform="translate(669,459) rotate(45)">R</text>
<g shape-rendering="auto">
<path d="M918 427 L847 688" stroke="#5533cc" stroke-width="1.3" fill="none"/>
<path d="M842 686 L853 690" stroke="#5533cc" stroke-width="1.5"/>
<path d="M847 688 L882 697" stroke="#5533cc" stroke-width="1.3" stroke-dasharray="4 3"/>
<circle cx="882" cy="697" r="5.5" fill="#4455ee"/>
<text font-family="Liberation Sans" font-size="15" font-weight="bold" fill="#000" transform="translate(897,497) rotate(-75)" textLength="50">7.09 m</text>
<text font-family="Liberation Sans" font-size="15" font-weight="bold" fill="#000" transform="translate(914,499) rotate(-75)">75.00°</text>
</g>
</svg>
<div class="a" style="left:916px;top:161px;width:18px;height:660px;background:linear-gradient(90deg,#d4e0ef,#e3ecf7 50%,#d6e2f1)"></div>
<div class="a" style="left:921px;top:165px;width:0;height:0;border-left:4.5px solid transparent;border-right:4.5px solid transparent;border-bottom:5px solid #4f5b78"></div>
<div class="a" style="left:921px;top:810px;width:0;height:0;border-left:4.5px solid transparent;border-right:4.5px solid transparent;border-top:5px solid #4f5b78"></div>
<div class="a" style="left:919px;top:482px;width:14px;height:17px;border:1px solid #9aaecc;border-radius:2px;background:linear-gradient(90deg,#f3f7fc,#dfe8f4)"></div>
<div class="a" style="left:922px;top:487px;width:8px;height:7px;border-top:1px solid #8a9ab4;border-bottom:1px solid #8a9ab4"></div>
<div class="a" style="left:922px;top:490px;width:8px;height:1px;background:#8a9ab4"></div>
<div class="a" style="left:258px;top:821px;width:658px;height:19px;border-top:1px solid #8a8f98;background:linear-gradient(#d6e2f0,#e4edf8 50%,#d4e0ef)"></div><div class="a" style="left:258px;top:840px;width:677px;height:2px;background:#bccbe0"></div>
<div class="a" style="left:265px;top:827px;width:0;height:0;border-top:4.5px solid transparent;border-bottom:4.5px solid transparent;border-right:5px solid #4f5b78"></div>
<div class="a" style="left:906px;top:827px;width:0;height:0;border-top:4.5px solid transparent;border-bottom:4.5px solid transparent;border-left:5px solid #4f5b78"></div>
<div class="a" style="left:581px;top:824px;width:16px;height:14px;border:1px solid #9aaecc;border-radius:2px;background:linear-gradient(#f3f7fc,#dfe8f4)"></div>
<div class="a" style="left:585px;top:827px;width:8px;height:8px;border-left:1px solid #8a9ab4;border-right:1px solid #8a9ab4"></div>
<div class="a" style="left:588px;top:827px;width:2px;height:8px;border-left:1px solid #8a9ab4;border-right:1px solid #8a9ab4"></div>
<div class="a" style="left:916px;top:821px;width:18px;height:19px;background:#c3d2e6"></div>
<div class="a" style="left:258px;top:160px;width:658px;height:1px;background:#fff"></div>
<div class="a" style="left:258px;top:160px;width:1px;height:661px;background:#fff"></div>

<!--/DRAW-->
<!--RIGHT-->
<!-- right panel -->
<div class="a" style="left:938px;top:162px;width:317px;height:679px;border:1px solid #76879c;border-radius:3px 3px 0 0;background:#e3ecf8"></div>
<div class="a" style="left:939px;top:163px;width:315px;height:23px;border-radius:2px 2px 0 0;border-top:1px solid #d8e8fa;border-bottom:1px solid #c0e0f8;background:#a9bfda"></div>
<svg class="a" style="left:942px;top:165px" width="14" height="17"><rect x="0.5" y="1.5" width="12" height="14.5" rx="2" fill="#f4ead8" stroke="#a57a4a"/><path d="M3 5 H10 M3 8 H10 M3 11 H10 M3 14 H10" stroke="#8a8a8a" stroke-width=".9"/><path d="M2.5 4 V15" stroke="#777" stroke-dasharray="1 1" stroke-width=".8"/></svg>
<div class="t" style="left:960px;top:168px;font-size:12px;color:#1e395b;letter-spacing:-0.2px">Proprietà</div>
<svg class="a" style="left:1237px;top:167px" width="12" height="13"><path d="M3.5 1.5 H8.5 V7.5 H3.5Z M1.5 7.5 H10.5 M6 7.5 V12" fill="none" stroke="#4a5a70" stroke-width="1.2"/></svg>
<div class="a" style="left:939px;top:186px;width:315px;height:35px;background:#0072c6"></div>
<div class="t" style="left:939px;width:315px;text-align:center;top:195px;font-size:15px;font-weight:bold;color:#fff;letter-spacing:0.2px">Balcone Cemento Armato</div>
<!-- tabs -->
<div class="a" style="left:1006px;top:225px;width:54px;height:23px;border:1px solid #8fa3bf;border-bottom:none;border-radius:2px 2px 0 0;background:linear-gradient(#bcd0e8,#b2c6e0)"></div>
<div class="t" style="left:1015px;top:232px;font-size:12px;color:#1e395b;letter-spacing:-0.45px">Risultati</div>
<div class="a" style="left:942px;top:247px;width:307px;height:589px;border:1px solid #8fa3bf;background:#fff"></div>
<div class="a" style="left:945px;top:223px;width:62px;height:26px;border:1px solid #8fa3bf;border-bottom:none;border-radius:2px 2px 0 0;background:#fff"></div>
<div class="t" style="left:955px;top:231px;font-size:12px;color:#1e1e1e;letter-spacing:-0.45px">Proprietà</div>
<div class="a" style="left:943px;top:248px;width:305px;height:587px;background:linear-gradient(#fff,#fff)"></div>
<div class="a" style="left:946px;top:248px;width:60px;height:2px;background:#fff"></div>
<div class="t" style="left:963px;top:259px;font-size:12px;color:#1e395b;letter-spacing:-0.2px">Filtro entità</div>
<div class="a" style="left:1032px;top:256px;width:185px;height:19px;border:1px solid #a9b8cc;background:#fff"></div>
<div class="t" style="left:1034px;top:260px;font-size:11.5px;color:#111;letter-spacing:-0.3px">Balcone Cemento Armato (1)</div>
<div class="a" style="left:1199px;top:257px;width:17px;height:17px;border-left:1px solid #b8c6d8;background:linear-gradient(#f1f5fb,#dde6f2)"></div>
<div class="a" style="left:1203px;top:264px;width:0;height:0;border-left:4px solid transparent;border-right:4px solid transparent;border-top:4px solid #4a5566"></div>
<svg class="a" style="left:1224px;top:256px" width="20" height="20"><circle cx="7.5" cy="7.5" r="5.5" fill="#e8f0f8" stroke="#8a98a8" stroke-width="1.8"/><circle cx="6" cy="6" r="2" fill="#fff"/><path d="M11.5 11.5 L17 17" stroke="#c87428" stroke-width="3" stroke-linecap="round"/></svg>

<div class="a" style="left:943px;top:280px;width:304px;height:496px;background:#e8eff9;border-top:1px solid #c8d6e8"></div>
<div class="a" style="left:943px;top:301px;width:304px;height:1px;background:#c8d6e8"></div>
<svg class="a" style="left:949px;top:288px" width="9" height="7"><path d="M1 1.5 L4.5 5 L8 1.5" fill="none" stroke="#4a5566" stroke-width="1.5"/></svg>
<div class="t" style="left:967px;top:286px;font-size:11px;font-weight:bold;color:#1e395b;letter-spacing:0.45px">Caratteristiche</div>
<div class="a" style="left:963px;top:301px;width:284px;height:19px;background:#fff;border-left:1px solid #c8d6e8;border-bottom:1px solid #c8d6e8"></div>
<div class="a" style="left:1078px;top:301px;width:1px;height:19px;background:#c8d6e8"></div>
<div class="t" style="left:985px;top:305px;font-size:11px;color:#1e395b;letter-spacing:-0.15px">Materiale</div>
<div class="t" style="left:1081px;top:305px;font-size:11px;color:#1e395b;letter-spacing:-0.15px">Cls C25/30_B450C</div>
<div class="a" style="left:963px;top:320px;width:284px;height:19px;background:#fff;border-left:1px solid #c8d6e8;border-bottom:1px solid #c8d6e8"></div>
<div class="a" style="left:1078px;top:320px;width:1px;height:19px;background:#c8d6e8"></div>
<div class="t" style="left:985px;top:324px;font-size:11px;color:#1e395b;letter-spacing:-0.15px">Spessore</div>
<div class="t" style="left:1081px;top:324px;font-size:11px;color:#1e395b;letter-spacing:-0.15px">20</div>
<div class="a" style="left:963px;top:339px;width:284px;height:19px;background:#fff;border-left:1px solid #c8d6e8;border-bottom:1px solid #c8d6e8"></div>
<div class="a" style="left:1078px;top:339px;width:1px;height:19px;background:#c8d6e8"></div>
<div class="t" style="left:985px;top:343px;font-size:11px;color:#1e395b;letter-spacing:-0.15px">Analisi Carichi</div>
<div class="t" style="left:1081px;top:343px;font-size:11px;color:#1e395b;letter-spacing:-0.15px">LatCem Balcone H20</div>
<div class="a" style="left:963px;top:358px;width:284px;height:19px;background:#fff;border-left:1px solid #c8d6e8;border-bottom:1px solid #c8d6e8"></div>
<div class="a" style="left:1078px;top:358px;width:1px;height:19px;background:#c8d6e8"></div>
<div class="t" style="left:985px;top:362px;font-size:11px;color:#1e395b;letter-spacing:-0.15px">Genera Torsione al</div>
<div class="t" style="left:1081px;top:362px;font-size:11px;color:#1e395b;letter-spacing:-0.15px">25</div>
<div class="a" style="left:963px;top:377px;width:284px;height:19px;background:#fff;border-left:1px solid #c8d6e8;border-bottom:1px solid #c8d6e8"></div>
<div class="a" style="left:1078px;top:377px;width:1px;height:19px;background:#c8d6e8"></div>
<div class="t" style="left:985px;top:381px;font-size:11px;color:#1e395b;letter-spacing:-0.15px">Tipologia</div>
<div class="t" style="left:1081px;top:381px;font-size:11px;color:#1e395b;letter-spacing:-0.15px">soletta piena</div>
<div class="a" style="left:943px;top:415px;width:304px;height:1px;background:#c8d6e8"></div>
<svg class="a" style="left:949px;top:402px" width="9" height="7"><path d="M1 1.5 L4.5 5 L8 1.5" fill="none" stroke="#4a5566" stroke-width="1.5"/></svg>
<div class="t" style="left:967px;top:400px;font-size:11px;font-weight:bold;color:#1e395b;letter-spacing:0.45px">Geometria</div>
<div class="a" style="left:963px;top:415px;width:284px;height:19px;background:#fff;border-left:1px solid #c8d6e8;border-bottom:1px solid #c8d6e8"></div>
<div class="a" style="left:1078px;top:415px;width:1px;height:19px;background:#c8d6e8"></div>
<div class="t" style="left:985px;top:419px;font-size:11px;color:#1e395b;letter-spacing:-0.15px">Superficie</div>
<div class="t" style="left:1081px;top:419px;font-size:11px;color:#1e395b;letter-spacing:-0.15px">29.40</div>
<div class="a" style="left:963px;top:434px;width:284px;height:19px;background:#efebdb;border-left:1px solid #c8d6e8;border-bottom:1px solid #c8d6e8"></div>
<svg class="a" style="left:969px;top:440px" width="9" height="7"><path d="M1 1.5 L4.5 5 L8 1.5" fill="none" stroke="#4a5566" stroke-width="1.5"/></svg>
<div class="t" style="left:987px;top:438px;font-size:11px;font-weight:bold;color:#1e395b;letter-spacing:0.2px">Riconoscimento PIANO</div>
<div class="a" style="left:963px;top:453px;width:20px;height:20px;background:#efebdb;border-left:1px solid #c8d6e8"></div>
<div class="a" style="left:983px;top:453px;width:264px;height:19px;background:#fff;border-left:1px solid #c8d6e8;border-bottom:1px solid #c8d6e8"></div>
<div class="a" style="left:1078px;top:453px;width:1px;height:19px;background:#c8d6e8"></div>
<div class="a" style="left:1005px;top:457px;width:72px;overflow:hidden;white-space:nowrap;line-height:1;font-size:11px;color:#1e395b;letter-spacing:-0.15px">Tipo Riconoscim</div>
<div class="t" style="left:1081px;top:457px;font-size:11px;color:#1e395b;letter-spacing:-0.15px">automatico</div>
<div class="a" style="left:963px;top:472px;width:284px;height:19px;background:#efebdb;border-left:1px solid #c8d6e8;border-bottom:1px solid #c8d6e8"></div>
<svg class="a" style="left:969px;top:478px" width="9" height="7"><path d="M1 1.5 L4.5 5 L8 1.5" fill="none" stroke="#4a5566" stroke-width="1.5"/></svg>
<div class="t" style="left:987px;top:476px;font-size:11px;font-weight:bold;color:#1e395b;letter-spacing:0.2px">Sezione di Calcolo</div>
<div class="a" style="left:963px;top:491px;width:20px;height:20px;background:#efebdb;border-left:1px solid #c8d6e8"></div>
<div class="a" style="left:983px;top:491px;width:264px;height:19px;background:#fff;border-left:1px solid #c8d6e8;border-bottom:1px solid #c8d6e8"></div>
<div class="a" style="left:1078px;top:491px;width:1px;height:19px;background:#c8d6e8"></div>
<div class="a" style="left:1005px;top:495px;width:72px;overflow:hidden;white-space:nowrap;line-height:1;font-size:11px;color:#1e395b;letter-spacing:-0.15px">Tipo</div>
<div class="t" style="left:1081px;top:495px;font-size:11px;color:#1e395b;letter-spacing:-0.15px">Automatica</div>
<div class="a" style="left:943px;top:529px;width:304px;height:1px;background:#c8d6e8"></div>
<svg class="a" style="left:949px;top:516px" width="9" height="7"><path d="M1 1.5 L4.5 5 L8 1.5" fill="none" stroke="#4a5566" stroke-width="1.5"/></svg>
<div class="t" style="left:967px;top:514px;font-size:11px;font-weight:bold;color:#1e395b;letter-spacing:0.45px">Carpenteria</div>
<div class="a" style="left:966px;top:512px;width:70px;height:16px;border:1px dotted #222"></div>
<div class="a" style="left:963px;top:529px;width:284px;height:19px;background:#fff;border-left:1px solid #c8d6e8;border-bottom:1px solid #c8d6e8"></div>
<div class="a" style="left:1078px;top:529px;width:1px;height:19px;background:#c8d6e8"></div>
<div class="t" style="left:985px;top:533px;font-size:11px;color:#1e395b;letter-spacing:-0.15px">Tipo</div>
<div class="t" style="left:1081px;top:533px;font-size:11px;color:#1e395b;letter-spacing:-0.15px">monotrave</div>
<div class="a" style="left:963px;top:548px;width:284px;height:19px;background:#fff;border-left:1px solid #c8d6e8;border-bottom:1px solid #c8d6e8"></div>
<div class="a" style="left:1078px;top:548px;width:1px;height:19px;background:#c8d6e8"></div>
<div class="t" style="left:985px;top:552px;font-size:11px;color:#1e395b;letter-spacing:-0.15px">Disegno armatura</div>
<div class="a" style="left:1156px;top:550px;width:13px;height:13px;border:1px solid #b4c0d0;background:linear-gradient(#dde6f1,#f4f7fb)"></div><svg class="a" style="left:1158px;top:552px" width="10" height="10"><path d="M1.5 5 L4 8 L8.5 1.5" fill="none" stroke="#2a4a7a" stroke-width="1.6"/></svg>
<div class="a" style="left:963px;top:567px;width:284px;height:19px;background:#fff;border-left:1px solid #c8d6e8;border-bottom:1px solid #c8d6e8"></div>
<div class="a" style="left:1078px;top:567px;width:1px;height:19px;background:#c8d6e8"></div>
<div class="t" style="left:985px;top:571px;font-size:11px;color:#1e395b;letter-spacing:-0.15px">Ferri a Flessione</div>
<div class="t" style="left:1081px;top:571px;font-size:11px;color:#1e395b;letter-spacing:-0.15px">Calcolo Automatico</div>
<div class="a" style="left:963px;top:586px;width:284px;height:19px;background:#e8eff9;border-left:1px solid #c8d6e8;border-bottom:1px solid #c8d6e8"></div>
<svg class="a" style="left:969px;top:592px" width="9" height="7"><path d="M1 1.5 L4.5 5 L8 1.5" fill="none" stroke="#4a5566" stroke-width="1.5"/></svg>
<div class="t" style="left:986px;top:590px;font-size:11px;color:#8b1a1a;letter-spacing:-0.1px">MOLLE</div>
<div class="a" style="left:963px;top:605px;width:20px;height:20px;background:#e8eff9;border-left:1px solid #c8d6e8"></div>
<div class="a" style="left:983px;top:605px;width:264px;height:19px;background:#fff;border-left:1px solid #c8d6e8;border-bottom:1px solid #c8d6e8"></div>
<div class="a" style="left:1078px;top:605px;width:1px;height:19px;background:#c8d6e8"></div>
<div class="a" style="left:1005px;top:609px;width:72px;overflow:hidden;white-space:nowrap;line-height:1;font-size:11px;color:#1e395b;letter-spacing:-0.15px">Ferri a Flessione</div>
<div class="t" style="left:1081px;top:609px;font-size:11px;color:#1e395b;letter-spacing:-0.15px">12</div>
<div class="a" style="left:963px;top:624px;width:20px;height:20px;background:#e8eff9;border-left:1px solid #c8d6e8"></div>
<div class="a" style="left:983px;top:624px;width:264px;height:19px;background:#fff;border-left:1px solid #c8d6e8;border-bottom:1px solid #c8d6e8"></div>
<div class="a" style="left:1078px;top:624px;width:1px;height:19px;background:#c8d6e8"></div>
<div class="a" style="left:1005px;top:628px;width:72px;overflow:hidden;white-space:nowrap;line-height:1;font-size:11px;color:#1e395b;letter-spacing:-0.15px">Passo</div>
<div class="t" style="left:1081px;top:628px;font-size:11px;color:#1e395b;letter-spacing:-0.15px">25</div>
<div class="a" style="left:963px;top:643px;width:284px;height:19px;background:#e8eff9;border-left:1px solid #c8d6e8;border-bottom:1px solid #c8d6e8"></div>
<svg class="a" style="left:969px;top:649px" width="9" height="7"><path d="M1 1.5 L4.5 5 L8 1.5" fill="none" stroke="#4a5566" stroke-width="1.5"/></svg>
<div class="t" style="left:986px;top:647px;font-size:11px;color:#8b1a1a;letter-spacing:-0.1px">MONCONI</div>
<div class="a" style="left:963px;top:662px;width:20px;height:20px;background:#e8eff9;border-left:1px solid #c8d6e8"></div>
<div class="a" style="left:983px;top:662px;width:264px;height:19px;background:#fff;border-left:1px solid #c8d6e8;border-bottom:1px solid #c8d6e8"></div>
<div class="a" style="left:1078px;top:662px;width:1px;height:19px;background:#c8d6e8"></div>
<div class="a" style="left:1005px;top:666px;width:72px;overflow:hidden;white-space:nowrap;line-height:1;font-size:11px;color:#1e395b;letter-spacing:-0.15px">Diametro</div>
<div class="t" style="left:1081px;top:666px;font-size:11px;color:#1e395b;letter-spacing:-0.15px">12</div>
<div class="a" style="left:963px;top:681px;width:20px;height:20px;background:#e8eff9;border-left:1px solid #c8d6e8"></div>
<div class="a" style="left:983px;top:681px;width:264px;height:19px;background:#fff;border-left:1px solid #c8d6e8;border-bottom:1px solid #c8d6e8"></div>
<div class="a" style="left:1078px;top:681px;width:1px;height:19px;background:#c8d6e8"></div>
<div class="a" style="left:1005px;top:685px;width:72px;overflow:hidden;white-space:nowrap;line-height:1;font-size:11px;color:#1e395b;letter-spacing:-0.15px">Passo</div>
<div class="t" style="left:1081px;top:685px;font-size:11px;color:#1e395b;letter-spacing:-0.15px">25</div>
<div class="a" style="left:963px;top:700px;width:284px;height:19px;background:#e8eff9;border-left:1px solid #c8d6e8;border-bottom:1px solid #c8d6e8"></div>
<svg class="a" style="left:969px;top:706px" width="9" height="7"><path d="M1 1.5 L4.5 5 L8 1.5" fill="none" stroke="#4a5566" stroke-width="1.5"/></svg>
<div class="t" style="left:986px;top:704px;font-size:11px;color:#8b1a1a;letter-spacing:-0.1px">FERRI di RIPARTIZIONE</div>
<div class="a" style="left:963px;top:719px;width:20px;height:20px;background:#e8eff9;border-left:1px solid #c8d6e8"></div>
<div class="a" style="left:983px;top:719px;width:264px;height:19px;background:#fff;border-left:1px solid #c8d6e8;border-bottom:1px solid #c8d6e8"></div>
<div class="a" style="left:1078px;top:719px;width:1px;height:19px;background:#c8d6e8"></div>
<div class="a" style="left:1005px;top:723px;width:72px;overflow:hidden;white-space:nowrap;line-height:1;font-size:11px;color:#1e395b;letter-spacing:-0.15px">Superiori</div>
<div class="t" style="left:1081px;top:723px;font-size:11px;color:#1e395b;letter-spacing:-0.15px">ø8/25</div>
<div class="a" style="left:963px;top:738px;width:20px;height:20px;background:#e8eff9;border-left:1px solid #c8d6e8"></div>
<div class="a" style="left:983px;top:738px;width:264px;height:19px;background:#fff;border-left:1px solid #c8d6e8;border-bottom:1px solid #c8d6e8"></div>
<div class="a" style="left:1078px;top:738px;width:1px;height:19px;background:#c8d6e8"></div>
<div class="a" style="left:1005px;top:742px;width:72px;overflow:hidden;white-space:nowrap;line-height:1;font-size:11px;color:#1e395b;letter-spacing:-0.15px">Inferiori</div>
<div class="t" style="left:1081px;top:742px;font-size:11px;color:#1e395b;letter-spacing:-0.15px">ø8/25</div>
<div class="a" style="left:943px;top:776px;width:304px;height:1px;background:#c8d6e8"></div>
<svg class="a" style="left:950px;top:762px" width="7" height="10"><path d="M1.5 1 L5 4.5 L1.5 8" fill="none" stroke="#4a5566" stroke-width="1.5"/></svg>
<div class="t" style="left:967px;top:761px;font-size:11px;font-weight:bold;color:#1e395b;letter-spacing:0.45px">Aspetto</div>
<div class="a" style="left:960px;top:583px;width:151px;height:122px;border:5px solid #3d3fc6"></div>
<svg class="a" style="left:940px;top:476px" width="26" height="40"><path d="M6.5 2 H18.5 V18 H23 L12.5 38 L2 18 H6.5Z" fill="#3d3fc6"/></svg>
<svg class="a" style="left:1110px;top:622px" width="40" height="26"><path d="M1.5 13.5 L21.5 2.5 V7 H37.5 V19 H21.5 V24.5Z" fill="#3d3fc6"/></svg>
<svg class="a" style="left:1111px;top:680px" width="40" height="26"><path d="M1.5 13 L21.5 2 V6.5 H38 V18.5 H21.5 V24Z" fill="#3d3fc6"/></svg>

<div class="a" style="left:1259px;top:164px;width:25px;height:57px;border:1px solid #a3b4ca;border-right-color:#c3d0e0;border-bottom-color:#b3c2d6;background:linear-gradient(90deg,#e2eaf5,#d3dff0)"></div>
<svg class="a" style="left:1262px;top:168px" width="19" height="19"><rect x="1.5" y="1.5" width="15" height="15" fill="none" stroke="#222" stroke-width="1.2" stroke-dasharray="2 1.5"/><rect x="4.5" y="3.5" width="6" height="11" fill="#fff" stroke="#999"/><path d="M7 4 H12 L15 7 V15 H7Z" fill="#f8e4cc" stroke="#d08a48"/><path d="M9 9 H13 V13 H9Z M11 9 V13 M9 11 H13" stroke="#999" stroke-width=".8" fill="#fff"/></svg>
<div class="t" style="left:1264px;top:190px;font-size:12px;color:#111;writing-mode:vertical-rl;letter-spacing:-0.2px">Copia</div>
<div class="a" style="left:1259px;top:228px;width:25px;height:86px;border:1px solid #a3b4ca;border-right-color:#c3d0e0;border-bottom-color:#b3c2d6;background:linear-gradient(90deg,#e2eaf5,#d3dff0)"></div>
<svg class="a" style="left:1262px;top:232px" width="19" height="19"><path d="M3.5 1.5 H12 L16.5 6 V17.5 H3.5Z" fill="#fff" stroke="#aaa"/><text x="1" y="17" font-family="Liberation Sans" font-weight="bold" font-size="10" fill="#e06a1a">BG</text></svg>
<div class="t" style="left:1264px;top:254px;font-size:12px;color:#111;writing-mode:vertical-rl;letter-spacing:-0.2px">Background</div>
<div class="a" style="left:1259px;top:320px;width:25px;height:101px;border:1px solid #a3b4ca;border-right-color:#c3d0e0;border-bottom-color:#b3c2d6;background:linear-gradient(90deg,#e2eaf5,#d3dff0)"></div>
<svg class="a" style="left:1262px;top:324px" width="19" height="19"><rect x="2" y="3" width="6" height="6" fill="#3a9ad8"/><path d="M3 6 L5 8 L8 3" stroke="#fff" fill="none"/><rect x="10" y="3" width="6" height="6" fill="#aaa" stroke="#777"/><rect x="2" y="11" width="6" height="6" fill="#aaa" stroke="#777"/><path d="M12 8 L16 14 L14 14 L15 17" stroke="#555" fill="none"/></svg>
<div class="t" style="left:1264px;top:346px;font-size:12px;color:#111;writing-mode:vertical-rl;letter-spacing:-0.2px">Filtro e Ricerca</div>
<div class="a" style="left:1259px;top:427px;width:25px;height:74px;border:1px solid #a3b4ca;border-right-color:#c3d0e0;border-bottom-color:#b3c2d6;background:linear-gradient(90deg,#e2eaf5,#d3dff0)"></div>
<svg class="a" style="left:1262px;top:431px" width="19" height="19"><path d="M3.5 1.5 H13 L16.5 5 V17.5 H3.5Z" fill="#fff" stroke="#888"/><path d="M6 6 H14 M6 14 H14 M7 6 V14 M13 6 V14 M7 10 H13" stroke="#3a3aa0" stroke-width="1"/></svg>
<div class="t" style="left:1264px;top:453px;font-size:12px;color:#111;writing-mode:vertical-rl;letter-spacing:-0.2px">Armature</div>
<div class="a" style="left:1259px;top:508px;width:25px;height:68px;border:1px solid #a3b4ca;border-right-color:#c3d0e0;border-bottom-color:#b3c2d6;background:linear-gradient(90deg,#e2eaf5,#d3dff0)"></div>
<svg class="a" style="left:1262px;top:512px" width="19" height="19"><rect x="2" y="5" width="4" height="12" fill="#ccc" stroke="#888" stroke-width=".7"/><rect x="7" y="2" width="4" height="15" fill="#ddd" stroke="#888" stroke-width=".7"/><rect x="12" y="7" width="4" height="10" fill="#bbb" stroke="#888" stroke-width=".7"/><path d="M1 17.5 H18" stroke="#777"/></svg>
<div class="t" style="left:1264px;top:534px;font-size:12px;color:#111;writing-mode:vertical-rl;letter-spacing:-0.2px">Risultati</div>
<div class="a" style="left:1259px;top:581px;width:25px;height:91px;border:1px solid #a3b4ca;border-right-color:#c3d0e0;border-bottom-color:#b3c2d6;background:linear-gradient(90deg,#e2eaf5,#d3dff0)"></div>
<svg class="a" style="left:1262px;top:585px" width="19" height="19"><rect x="2" y="3" width="5" height="14" fill="#7ad030" stroke="#4a9a10" stroke-width=".7"/><path d="M7 3 H17 V9 H12 L7 17Z" fill="#f5d030"/><rect x="11" y="2.5" width="6" height="5" fill="#e0eef8" stroke="#6a8ab0" stroke-width=".7"/></svg>
<div class="t" style="left:1264px;top:607px;font-size:12px;color:#111;writing-mode:vertical-rl;letter-spacing:-0.2px">Collegamenti</div>
<div class="a" style="left:1259px;top:678px;width:25px;height:49px;border:1px solid #a3b4ca;border-right-color:#c3d0e0;border-bottom-color:#b3c2d6;background:linear-gradient(90deg,#e2eaf5,#d3dff0)"></div>
<svg class="a" style="left:1262px;top:682px" width="19" height="19"><circle cx="6" cy="11" r="4" fill="#d02020"/><circle cx="12" cy="6" r="4" fill="#f0c020"/><circle cx="12" cy="14" r="3.5" fill="#3a9ad8"/></svg>
<div class="t" style="left:1264px;top:704px;font-size:12px;color:#111;writing-mode:vertical-rl;letter-spacing:-0.2px">BIM</div>
<div class="a" style="left:1285px;top:157px;width:1px;height:686px;background:#9aaac0"></div>
<div class="a" style="left:8px;top:843px;width:1278px;height:24px;border-top:1px solid #8ea2bd;border-bottom:1px solid #8ea2bd;background:linear-gradient(#e0e9f5,#cbd8ea 50%,#bac9de)"></div>
<div class="a" style="left:820px;top:845px;width:1px;height:20px;background:#9fb0c6;box-shadow:1px 0 #eef4fb"></div>
<div class="a" style="left:1045px;top:845px;width:1px;height:20px;background:#9fb0c6;box-shadow:1px 0 #eef4fb"></div>
<div class="a" style="left:1190px;top:845px;width:1px;height:20px;background:#9fb0c6;box-shadow:1px 0 #eef4fb"></div>
<div class="a" style="left:1216px;top:845px;width:1px;height:20px;background:#9fb0c6;box-shadow:1px 0 #eef4fb"></div>
<div class="a" style="left:1242px;top:845px;width:1px;height:20px;background:#9fb0c6;box-shadow:1px 0 #eef4fb"></div>
<svg class="a" style="left:824px;top:847px" width="11" height="13"><rect x="0" y="0" width="11" height="13" fill="#fff"/><rect x="2.5" y="1.5" width="6" height="10" fill="#8ab0e0" stroke="#3a5a90"/><path d="M4 4 H7 M4 7 H7" stroke="#fff"/></svg>
<div class="t" style="left:840px;top:848px;font-size:12px;font-weight:bold;color:#3b5a9a;letter-spacing:-0.3px">Non calcolato</div>
<div class="t" style="left:1048px;top:849px;font-size:12px;color:#1e395b;letter-spacing:-0.2px">X: 4.17 - Y: 2.38</div>
<svg class="a" style="left:1272px;top:851px" width="12" height="12"><g fill="#9aa8bc"><rect x="9" y="1" width="2" height="2"/><rect x="6" y="4" width="2" height="2"/><rect x="9" y="4" width="2" height="2"/><rect x="3" y="7" width="2" height="2"/><rect x="6" y="7" width="2" height="2"/><rect x="9" y="7" width="2" height="2"/></g></svg>
<div class="a" style="left:1291px;top:10px;width:1px;height:856px;background:#d8e6f5"></div>

<!--/RIGHT-->
</body></html>
